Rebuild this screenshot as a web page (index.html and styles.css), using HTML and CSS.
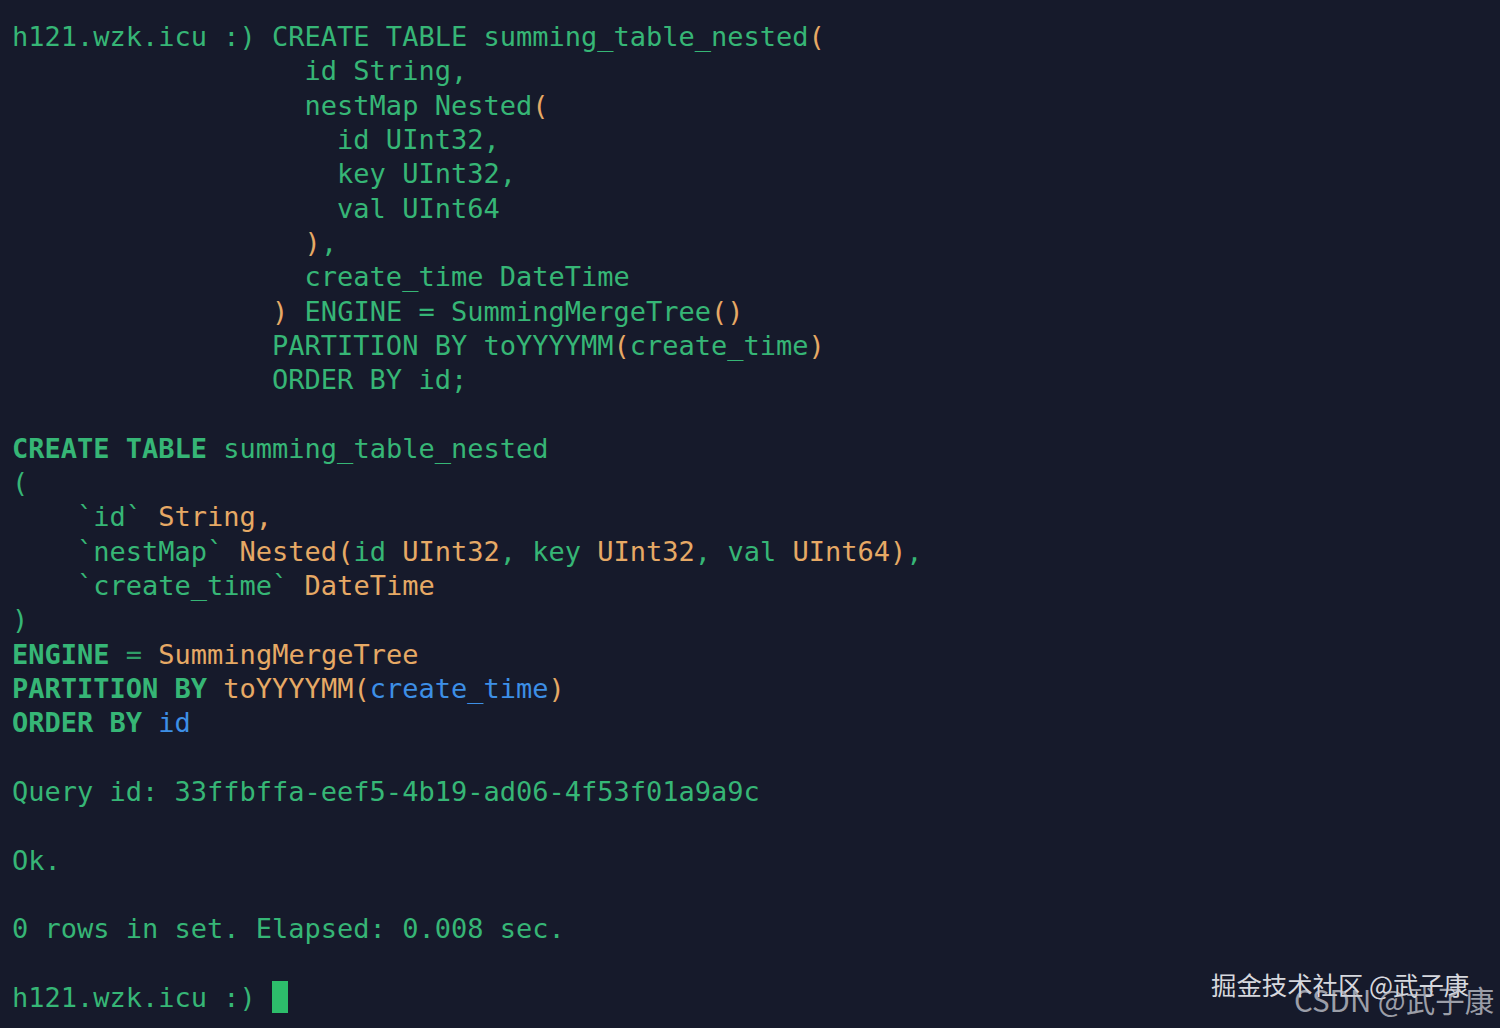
FILE: index.html
```html
<!DOCTYPE html>
<html>
<head>
<meta charset="utf-8">
<link rel="stylesheet" href="styles.css">
</head>
<body>
<main class="term">
<pre class="out"><span class="g">h121.wzk.icu :) CREATE TABLE summing_table_nested</span><span class="o">(</span>
<span class="g">                  id String,</span>
<span class="g">                  nestMap Nested</span><span class="o">(</span>
<span class="g">                    id UInt32,</span>
<span class="g">                    key UInt32,</span>
<span class="g">                    val UInt64</span>
                  <span class="o">)</span><span class="g">,</span>
<span class="g">                  create_time DateTime</span>
                <span class="o">)</span><span class="g"> ENGINE = SummingMergeTree</span><span class="o">()</span>
<span class="g">                PARTITION BY toYYYYMM</span><span class="o">(</span><span class="g">create_time</span><span class="o">)</span>
<span class="g">                ORDER BY id;</span>

<span class="g b">CREATE TABLE</span><span class="g"> summing_table_nested</span>
<span class="g">(</span>
<span class="g">    `id`</span> <span class="o">String,</span>
<span class="g">    `nestMap`</span> <span class="o">Nested(</span><span class="g">id</span> <span class="o">UInt32</span><span class="g">,</span> <span class="g">key</span> <span class="o">UInt32</span><span class="g">,</span> <span class="g">val</span> <span class="o">UInt64)</span><span class="g">,</span>
<span class="g">    `create_time`</span> <span class="o">DateTime</span>
<span class="g">)</span>
<span class="g b">ENGINE</span> <span class="g dim">=</span> <span class="o">SummingMergeTree</span>
<span class="g b">PARTITION BY</span> <span class="o">toYYYYMM(</span><span class="bl">create_time</span><span class="o">)</span>
<span class="g b">ORDER BY</span> <span class="bl">id</span>

<span class="g">Query id: 33ffbffa-eef5-4b19-ad06-4f53f01a9a9c</span>

<span class="g">Ok.</span>

<span class="g">0 rows in set. Elapsed: 0.008 sec.</span>

<span class="g">h121.wzk.icu :) </span><span class="cursor"></span></pre>
<div class="wm wm-juejin">掘金技术社区 @武子康</div>
<div class="wm wm-csdn">CSDN @武子康</div>
</main>
</body>
</html>
```

FILE: styles.css
```css
html, body {
  margin: 0;
  padding: 0;
  background: #161a2b;
  width: 1500px;
  height: 1028px;
  overflow: hidden;
}

.term {
  position: relative;
  width: 1500px;
  height: 1028px;
  background: #161a2b;
  box-sizing: border-box;
  padding: 20px 0 0 12px;
}

.out {
  margin: 0;
  font-family: "DejaVu Sans Mono", "Liberation Mono", monospace;
  font-size: 27px;
  line-height: 34.32px;
  color: #36b676;
  white-space: pre;
}

.g { color: #36b676; }
.o { color: #e6a965; }
.bl { color: #3d8fe6; }
.b { font-weight: bold; }
.dim { color: #2f9e68; }

.cursor {
  display: inline-block;
  width: 16px;
  height: 32px;
  background: #2dbd6b;
  vertical-align: -6px;
}

.wm {
  position: absolute;
  font-family: "Noto Sans CJK SC", "Liberation Sans", sans-serif;
  white-space: nowrap;
}

.wm-juejin {
  left: 1211px;
  top: 966px;
  font-size: 25.4px;
  color: #d6d8de;
}

.wm-csdn {
  left: 1294px;
  top: 978px;
  font-size: 29.5px;
  color: rgba(200, 202, 210, 0.75);
}
```
